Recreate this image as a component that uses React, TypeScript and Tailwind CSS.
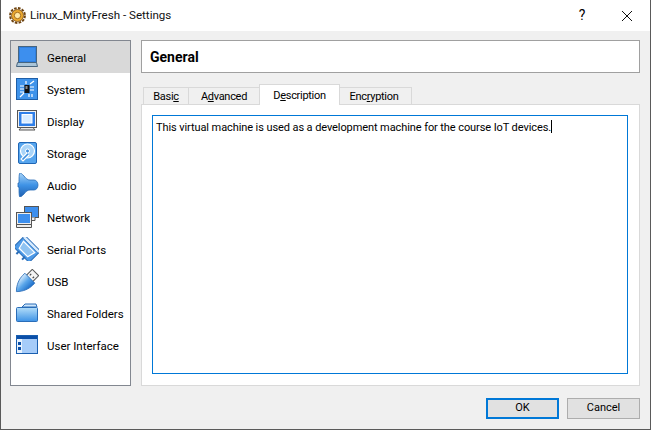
import type { ReactNode } from 'react';

const ic = { width: 24, height: 24, viewBox: '0 0 24 24' };

const GearLogo = () => (
  <svg width="17" height="17" viewBox="0 0 17 17">
    <circle cx="8.5" cy="8.5" r="7.4" fill="none" stroke="#6e4412" strokeWidth="2" strokeDasharray="2.6 1.3" />
    <circle cx="8.5" cy="8.5" r="6" fill="#eba92f" stroke="#7a4a12" strokeWidth="0.8" />
    <circle cx="8.5" cy="8.5" r="3.2" fill="#ffe9a8" stroke="#a56c1c" strokeWidth="1" />
  </svg>
);

const GeneralIcon = () => (
  <svg {...ic}>
    <rect x="3.5" y="1.5" width="18" height="16" fill="#2f7fe0" stroke="#47657f" />
    <rect x="5" y="3" width="15" height="13" fill="#3d8fee" />
    <path d="M2.5 17.5h19l1 4h-21z" fill="#a9c4d8" stroke="#47657f" />
  </svg>
);

const SystemIcon = () => (
  <svg {...ic}>
    <rect x="1.5" y="1.5" width="21" height="21" fill="#3f93ea" stroke="#1f5fa8" />
    <path d="M5 9h4M5 12h4M5 15h4M15 10h4M15 13h4M15 7l4-3M5 20l4-4M14 20v-3M17 20v-3M11 4v3" stroke="#fff" strokeWidth="1.2" fill="none" />
    <rect x="9.5" y="8" width="5" height="8" fill="#111" />
    <rect x="10.5" y="9" width="2" height="3" fill="#8a8a8a" />
  </svg>
);

const DisplayIcon = () => (
  <svg {...ic}>
    <rect x="2.5" y="1.5" width="19" height="17" fill="#f2f2f2" stroke="#555" />
    <rect x="4" y="3" width="16" height="14" fill="#2f7fe8" />
    <rect x="7" y="5.5" width="10" height="8.5" fill="#d9ecff" stroke="#fff" />
    <path d="M6 18.5h12l2 2.5H4z" fill="#e8e8e8" stroke="#555" />
  </svg>
);

const StorageIcon = () => (
  <svg {...ic}>
    <rect x="3.5" y="1.5" width="18" height="21" rx="1.5" fill="#56a5ee" stroke="#1f66b5" />
    <circle cx="12.5" cy="10" r="7" fill="#a9d4f8" stroke="#fff" strokeWidth="1.2" />
    <circle cx="12.5" cy="10" r="2" fill="#3f8fdf" stroke="#fff" />
    <path d="M12 12l-6 6 2 2 6-6" fill="#3f8fdf" stroke="#fff" strokeWidth="1.1" />
  </svg>
);

const AudioIcon = () => (
  <svg {...ic}>
    <defs>
      <linearGradient id="aud" x1="0" y1="0" x2="0" y2="1">
        <stop offset="0" stopColor="#a9d4f8" />
        <stop offset="0.5" stopColor="#3f93e6" />
        <stop offset="1" stopColor="#1f60b0" />
      </linearGradient>
    </defs>
    <path
      d="M5 0C6 0 7 1 9 3C11 6 13 7 15 7H19C21 7 23 9 23 12C23 15 21 17 19 17H15C13 17 11 18 9 21C7 23 6 24 5 24C4 24 4 18 4 14H3V10H4C4 6 4 0 5 0Z"
      fill="url(#aud)"
      stroke="#2a6db8"
      strokeWidth="0.8"
    />
  </svg>
);

const NetworkIcon = () => (
  <svg {...ic}>
    <rect x="9.5" y="1.5" width="14" height="11" fill="#3d8fee" stroke="#555" />
    <path d="M14 12.5v3h6v-3" fill="#eee" stroke="#555" />
    <rect x="1.5" y="7.5" width="15" height="12" fill="#eee" stroke="#555" />
    <rect x="3" y="9" width="12" height="9" fill="#3d8fee" />
    <path d="M1.5 19.5h15v3h-15z" fill="#eee" stroke="#555" />
  </svg>
);

const SerialIcon = () => (
  <svg {...ic}>
    <g transform="rotate(45 12 12)">
      <rect x="1" y="4" width="22" height="16" rx="1" fill="#4d9ae8" stroke="#2a6db8" />
      <rect x="1" y="4" width="22" height="3" fill="#d9ecff" stroke="#3a78bc" strokeWidth="0.7" />
      <path d="M4 9h16l-2 8H6z" fill="#8fc3f2" stroke="#fff" strokeWidth="1.2" />
      <path d="M8 19v4M16 19v4" stroke="#2a6db8" strokeWidth="2" />
    </g>
  </svg>
);

const UsbIcon = () => (
  <svg {...ic}>
    <defs>
      <linearGradient id="usb" x1="0" y1="0" x2="0" y2="1">
        <stop offset="0" stopColor="#d4eafc" />
        <stop offset="0.5" stopColor="#5aa6ea" />
        <stop offset="1" stopColor="#1f6fca" />
      </linearGradient>
    </defs>
    <g transform="rotate(-45 12 12)">
      <rect x="15" y="7.5" width="9" height="9" fill="#f4f4f4" stroke="#555" />
      <path d="M18 10h2M18 14h2" stroke="#444" strokeWidth="1.2" />
      <path d="M-3 12C2 7 8 5 13 5H16V19H13C8 19 2 17 -3 12Z" fill="url(#usb)" stroke="#2a6db8" strokeWidth="0.8" />
    </g>
  </svg>
);

const FolderIcon = () => (
  <svg {...ic}>
    <defs>
      <linearGradient id="fld" x1="0" y1="0" x2="0" y2="1">
        <stop offset="0" stopColor="#b4def9" />
        <stop offset="1" stopColor="#3d92e6" />
      </linearGradient>
    </defs>
    <path d="M7 6l3-3h11l1 3z" fill="#cfe7fb" stroke="#2a6db8" />
    <rect x="1.5" y="6.5" width="21" height="14" rx="1" fill="url(#fld)" stroke="#2a6db8" />
  </svg>
);

const UiIcon = () => (
  <svg {...ic}>
    <rect x="1.5" y="2.5" width="21" height="18" fill="#a6ccf9" stroke="#1a5fb0" />
    <rect x="2" y="3" width="20" height="3" fill="#0b4fa8" />
    <rect x="2" y="6" width="5" height="14" fill="#e8f2fd" />
    <rect x="3" y="9" width="3" height="3" fill="#0b4fa8" />
    <rect x="3" y="14" width="3" height="3" fill="#0b4fa8" />
  </svg>
);

const sections: { label: string; icon: ReactNode }[] = [
  { label: 'General', icon: <GeneralIcon /> },
  { label: 'System', icon: <SystemIcon /> },
  { label: 'Display', icon: <DisplayIcon /> },
  { label: 'Storage', icon: <StorageIcon /> },
  { label: 'Audio', icon: <AudioIcon /> },
  { label: 'Network', icon: <NetworkIcon /> },
  { label: 'Serial Ports', icon: <SerialIcon /> },
  { label: 'USB', icon: <UsbIcon /> },
  { label: 'Shared Folders', icon: <FolderIcon /> },
  { label: 'User Interface', icon: <UiIcon /> },
];

const Tab = ({ children, active, w }: { children: ReactNode; active?: boolean; w: string }) => (
  <div
    className={
      active
        ? `${w} h-[21px] -mb-px relative z-10 bg-white border border-b-0 border-[#d9d9d9] -ml-px flex items-center justify-center pt-[2px]`
        : `${w} h-[17px] bg-[#f0f0f0] border border-b-0 border-[#d9d9d9] -ml-px first:ml-0 flex items-center justify-center pt-[2px]`
    }
  >
    {children}
  </div>
);

export default function App() {
  return (
    <div className="w-[651px] h-[430px] flex flex-col bg-[#f0f0f0] border-x border-b border-[#5a5a5a] overflow-hidden font-['Roboto',sans-serif] text-[11.5px] text-black">
      {/* Title bar */}
      <div className="h-[31px] shrink-0 bg-white flex items-center pl-[8px]">
        <GearLogo />
        <span className="ml-[4px] text-[11.6px] text-[#111]">Linux_MintyFresh - Settings</span>
        <span className="ml-auto w-[20px] text-center text-[14px]">?</span>
        <svg className="ml-[29px] mr-[17px]" width="12" height="12" viewBox="0 0 12 12">
          <path d="M1 1l10 10M11 1L1 11" stroke="#111" fill="none" />
        </svg>
      </div>

      <div className="flex-1 flex flex-col pl-[9px] pr-[10px] pt-[9px] pb-[10px]">
        <div className="flex gap-[10px] h-[346px]">
          {/* Sections */}
          <div className="w-[121px] shrink-0 bg-white border border-[#828790]">
            {sections.map((s, i) => (
              <div
                key={s.label}
                className={`h-[32px] flex items-center pl-[4px] whitespace-nowrap ${i === 0 ? 'bg-[#d9d9d9]' : ''}`}
              >
                <span className="w-[24px] h-[24px] shrink-0">{s.icon}</span>
                <span className="ml-[8px] pt-[3px]">{s.label}</span>
              </div>
            ))}
          </div>

          {/* Page */}
          <div className="flex-1 flex flex-col">
            <div className="h-[33px] shrink-0 bg-white border border-[#a0a0a0] flex items-center pl-[8px] pt-[1px] font-bold text-[14px]">
              General
            </div>
            <div className="mt-[10px] h-[21px] flex items-end pl-[2px] relative text-[11px] tracking-[-0.3px]">
              <Tab w="w-[46px]">
                <span>Basi<u>c</u></span>
              </Tab>
              <Tab w="w-[72px]">
                <span>A<u>d</u>vanced</span>
              </Tab>
              <Tab w="w-[81px]" active>
                <span>D<u>e</u>scription</span>
              </Tab>
              <Tab w="w-[73px]">
                <span className="-ml-[3px]">Enc<u>r</u>yption</span>
              </Tab>
            </div>
            <div className="flex-1 bg-white border border-[#d9d9d9] pl-[10px] pr-[11px] pt-[10px] pb-[11px]">
              <div className="h-full border border-[#0078d7] px-[3px] pt-[4px] text-[11px] tracking-[-0.09px] leading-[16px] whitespace-nowrap">
                This virtual machine is used as a development machine for the course IoT devices.
                <span className="inline-block w-px h-[13px] bg-black align-[-2px]" />
              </div>
            </div>
          </div>
        </div>

        {/* Buttons */}
        <div className="mt-[12px] flex justify-end gap-[8px] text-[11px]">
          <button className="w-[73px] h-[21px] bg-[#e1e1e1] border-2 border-[#0078d7] text-center">OK</button>
          <button className="w-[73px] h-[21px] bg-[#e1e1e1] border border-[#adadad] text-center">Cancel</button>
        </div>
      </div>
    </div>
  );
}
